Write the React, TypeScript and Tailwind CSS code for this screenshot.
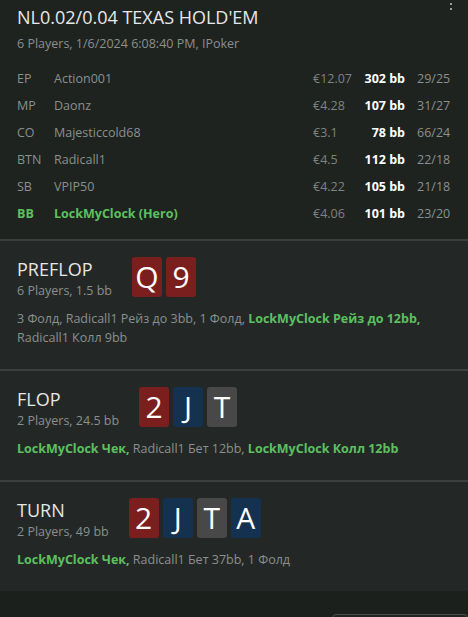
import React from "react";

type Player = { pos: string; name: string; eur: string; bb: string; stat: string; hero?: boolean };

const players: Player[] = [
  { pos: "EP", name: "Action001", eur: "€12.07", bb: "302 bb", stat: "29/25" },
  { pos: "MP", name: "Daonz", eur: "€4.28", bb: "107 bb", stat: "31/27" },
  { pos: "CO", name: "Majesticcold68", eur: "€3.1", bb: "78 bb", stat: "66/24" },
  { pos: "BTN", name: "Radicall1", eur: "€4.5", bb: "112 bb", stat: "22/18" },
  { pos: "SB", name: "VPIP50", eur: "€4.22", bb: "105 bb", stat: "21/18" },
  { pos: "BB", name: "LockMyClock (Hero)", eur: "€4.06", bb: "101 bb", stat: "23/20", hero: true },
];

type CardT = { r: string; c: "red" | "blue" | "grey" };

function Card({ r, c }: CardT) {
  const bg = c === "red" ? "bg-[#7a1e1e]" : c === "blue" ? "bg-[#14314f]" : "bg-[#484848]";
  return (
    <div className={`${bg} w-[30px] h-[40px] rounded-[3px] flex items-center justify-center text-white text-[30px] leading-none`}>
      {r}
    </div>
  );
}

type Seg = { t: string; hero?: boolean };

function Street({ title, sub, cards, actions }: { title: string; sub: string; cards: CardT[]; actions: Seg[] }) {
  return (
    <div className="border-t-2 border-[#3a3e3c] px-[17px] pt-[16px] pb-[22px]">
      <div className="flex items-start h-[40px]">
        <div className="pt-[2px] mr-[20px]">
          <div className="text-[18px] leading-[20px] text-[#e6e6e6]">{title}</div>
          <div className="mt-[3px] text-[12.5px] leading-[17px] text-[#8b8f8d]">{sub}</div>
        </div>
        <div className="flex gap-[4px]">
          {cards.map((c, i) => (
            <Card key={i} {...c} />
          ))}
        </div>
      </div>
      <div className="mt-[12px] text-[12.5px] leading-[19px] text-[#8b8f8d]">
        {actions.map((a, i) => (
          <span key={i} className={a.hero ? "text-[#5cc05f] font-bold" : ""}>
            {a.t}
          </span>
        ))}
      </div>
    </div>
  );
}

export default function App() {
  return (
    <div
      className="w-[468px] h-[617px] bg-[#1b201d] overflow-hidden relative"
      style={{ fontFamily: '"Open Sans", "Noto Sans", sans-serif' }}
    >
      <div className="bg-[#1e2320] relative">
        <div className="absolute right-[16px] top-[3px] flex flex-col gap-[3px]">
          <div className="w-[2px] h-[2px] bg-[#9a9e9c]" />
          <div className="w-[2px] h-[2px] bg-[#9a9e9c]" />
        </div>
        <div className="px-[17px] pt-[4px] pb-[11px]">
          <div className="text-[18px] leading-[26px] text-[#e8e8e8]">NL0.02/0.04 TEXAS HOLD'EM</div>
          <div className="text-[12.5px] leading-[20px] text-[#8b8f8d] mt-[4px]">6 Players, 1/6/2024 6:08:40 PM, IPoker</div>
          <div className="mt-[12px] text-[12.5px]">
            {players.map((p) => (
              <div key={p.pos} className="flex items-center h-[27px]">
                <div className={`w-[37px] ${p.hero ? "text-[#5cc05f] font-bold" : "text-[#8b8f8d]"}`}>{p.pos}</div>
                <div className={`flex-1 ${p.hero ? "text-[#5cc05f] font-bold" : "text-[#8b8f8d]"}`}>{p.name}</div>
                <div className="w-[46px] text-[#7e8280]">{p.eur}</div>
                <div className="w-[46px] text-right text-white font-bold">{p.bb}</div>
                <div className="w-[46px] pl-[12px] text-[#8b8f8d]">{p.stat}</div>
              </div>
            ))}
          </div>
        </div>
      </div>
      <div className="bg-[#232827]">
        <Street
          title="PREFLOP"
          sub="6 Players, 1.5 bb"
          cards={[
            { r: "Q", c: "red" },
            { r: "9", c: "red" },
          ]}
          actions={[
            { t: "3 Фолд, Radicall1 Рейз до 3bb, 1 Фолд, " },
            { t: "LockMyClock Рейз до 12bb,", hero: true },
            { t: " Radicall1 Колл 9bb" },
          ]}
        />
        <Street
          title="FLOP"
          sub="2 Players, 24.5 bb"
          cards={[
            { r: "2", c: "red" },
            { r: "J", c: "blue" },
            { r: "T", c: "grey" },
          ]}
          actions={[
            { t: "LockMyClock Чек,", hero: true },
            { t: " Radicall1 Бет 12bb, " },
            { t: "LockMyClock Колл 12bb", hero: true },
          ]}
        />
        <Street
          title="TURN"
          sub="2 Players, 49 bb"
          cards={[
            { r: "2", c: "red" },
            { r: "J", c: "blue" },
            { r: "T", c: "grey" },
            { r: "A", c: "blue" },
          ]}
          actions={[
            { t: "LockMyClock Чек,", hero: true },
            { t: " Radicall1 Бет 37bb, 1 Фолд" },
          ]}
        />
      </div>
      <div className="absolute left-[332px] right-0 top-[614px] h-[10px] rounded-t-[4px] border border-[#4a4e4c] bg-[#202523]" />
    </div>
  );
}
